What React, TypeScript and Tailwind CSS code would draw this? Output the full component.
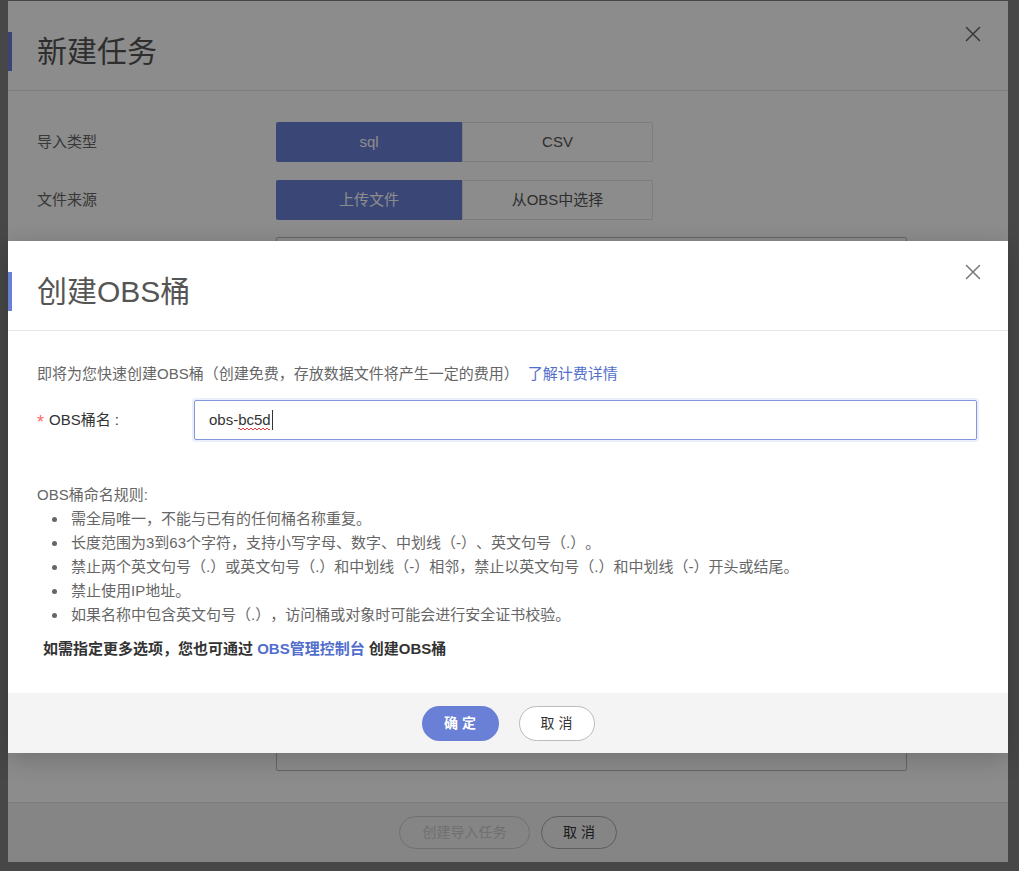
import React from 'react'

function CloseIcon({ color }: { color: string }) {
    return (
        <svg width="16" height="16" viewBox="0 0 16 16" fill="none">
            <path d="M1.5 1.5L14.5 14.5M14.5 1.5L1.5 14.5" stroke={color} strokeWidth="1.5" strokeLinecap="round" />
        </svg>
    )
}

const rules = [
    '需全局唯一，不能与已有的任何桶名称重复。',
    '长度范围为3到63个字符，支持小写字母、数字、中划线（-）、英文句号（.）。',
    '禁止两个英文句号（.）或英文句号（.）和中划线（-）相邻，禁止以英文句号（.）和中划线（-）开头或结尾。',
    '禁止使用IP地址。',
    '如果名称中包含英文句号（.），访问桶或对象时可能会进行安全证书校验。',
]

export default function App() {
    return (
        <div className="relative h-[871px] w-full overflow-hidden bg-[#818181] font-['Liberation_Sans','Noto_Sans_CJK_SC',sans-serif] [text-spacing-trim:space-all]">
            {/* background dialog: 新建任务 */}
            <div className="ml-[8px] mt-px flex h-[861px] w-[1000px] flex-col bg-white">
                <div className="flex h-[90px] shrink-0 items-start border-b border-[#e6e6e6] pt-[31px]">
                    <div className="h-[39px] w-[4px] bg-[#6a7fd6]" />
                    <div className="ml-[25px] text-[30px] leading-[39px] text-[#555]">新建任务</div>
                    <button className="ml-auto mr-[27px] -mt-[6px]"><CloseIcon color="#666" /></button>
                </div>
                <div className="flex flex-col pl-[29px] pt-[31px]">
                    <div className="flex items-center">
                        <div className="w-[239px] text-[15px] text-[#666]">导入类型</div>
                        <div className="flex h-[40px] text-[15px]">
                            <div className="flex w-[186px] items-center justify-center rounded-l-[2px] bg-[#6b80d8] text-white">sql</div>
                            <div className="flex w-[191px] items-center justify-center rounded-r-[2px] border border-[#e3e3e3] text-[#555]">CSV</div>
                        </div>
                    </div>
                    <div className="mt-[18px] flex items-center">
                        <div className="w-[239px] text-[15px] text-[#666]">文件来源</div>
                        <div className="flex h-[40px] text-[15px]">
                            <div className="flex w-[186px] items-center justify-center rounded-l-[2px] bg-[#6b80d8] text-white">上传文件</div>
                            <div className="flex w-[191px] items-center justify-center rounded-r-[2px] border border-[#e3e3e3] text-[#555]">从OBS中选择</div>
                        </div>
                    </div>
                    <div className="ml-[239px] mt-[17px] h-[534px] w-[631px] rounded-[2px] border border-[#bbb]" />
                </div>
                <div className="mt-auto flex h-[60px] items-center justify-center gap-[11px] border-t border-[#e0e0e0] bg-[#f2f2f2] text-[14px]">
                    <button className="h-[33px] w-[131px] rounded-full border border-[#ccc] text-[#ccc]">创建导入任务</button>
                    <button className="h-[33px] w-[76px] rounded-full border border-[#aaa] text-[#333]">取 消</button>
                </div>
            </div>

            {/* mask */}
            <div className="absolute inset-0 bg-black/45" />

            {/* foreground dialog: 创建OBS桶 */}
            <div className="absolute left-[8px] top-[241px] flex h-[512px] w-[1000px] flex-col bg-white shadow-[0_6px_24px_rgba(0,0,0,0.2)]">
                <div className="relative flex h-[90px] shrink-0 items-start border-b border-[#e8e8e8] pt-[31px]">
                    <div className="h-[39px] w-[4px] bg-[#6a7fd6]" />
                    <div className="ml-[25px] text-[30px] leading-[39px] text-[#555]">创建OBS桶</div>
                    <button className="absolute right-[27px] top-[23px]"><CloseIcon color="#777" /></button>
                </div>
                <div className="flex flex-col pl-[29px] pr-[31px] pt-[31px] text-[15px] leading-[24px] text-[#666]">
                    <div>
                        即将为您快速创建OBS桶（创建免费，存放数据文件将产生一定的费用）
                        <span className="ml-[9px] text-[#526ecc]">了解计费详情</span>
                    </div>
                    <div className="mt-[14px] flex items-center">
                        <div className="flex w-[157px] items-center text-[#333]">
                            <span className="mr-[5px] mt-[3px] text-[18px] leading-[18px] text-[#f66]">*</span>OBS桶名 :
                        </div>
                        <div className="relative flex h-[40px] flex-1 items-center rounded-[2px] border border-[#8496e0] pl-[14px] text-[#333] shadow-[0_0_0_2px_rgba(94,124,224,0.12)]">
                            <span className="relative">
                                obs-bc5d
                                <svg className="absolute left-[29px] top-[19px]" width="33" height="4" viewBox="0 0 33 4">
                                    <path d="M0 2 Q1 0 2 2 T4 2 T6 2 T8 2 T10 2 T12 2 T14 2 T16 2 T18 2 T20 2 T22 2 T24 2 T26 2 T28 2 T30 2 T32 2" stroke="#e0383e" strokeWidth="1" fill="none" />
                                </svg>
                            </span>
                            <span className="ml-px h-[20px] w-px bg-[#333]" />
                        </div>
                    </div>
                    <div className="mt-[43px]">OBS桶命名规则:</div>
                    <div className="flex flex-col">
                        {rules.map(r => (
                            <div key={r} className="flex items-center">
                                <span className="ml-[15px] mr-[14px] h-[5px] w-[5px] rounded-full bg-[#666]" />
                                <span>{r}</span>
                            </div>
                        ))}
                    </div>
                    <div className="mt-[10px] pl-[6px] font-bold text-[#333]">
                        如需指定更多选项，您也可通过 <span className="text-[#526ecc]">OBS管理控制台</span> 创建OBS桶
                    </div>
                </div>
                <div className="mt-auto flex h-[60px] items-center justify-center gap-[20px] bg-[#f4f4f4] text-[14px]">
                    <button className="h-[35px] w-[77px] rounded-full bg-[#6a7fd6] font-bold text-white">确 定</button>
                    <button className="h-[35px] w-[76px] rounded-full border border-[#bbb] bg-white text-[#333]">取 消</button>
                </div>
            </div>
        </div>
    )
}
